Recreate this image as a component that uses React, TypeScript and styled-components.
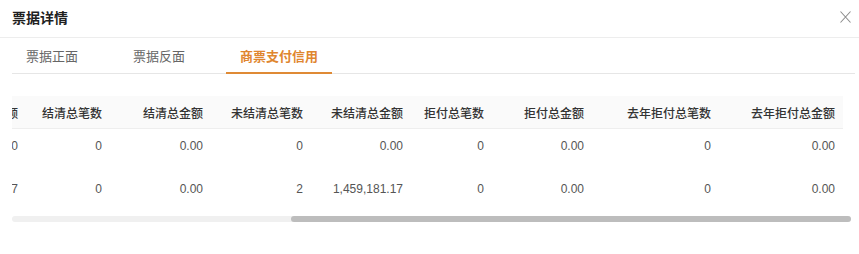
import * as React from 'react';
import styled, { createGlobalStyle } from 'styled-components';

interface Column {
  key: string;
  title: string;
  width: number;
}

interface CreditRow {
  id: string;
  tall?: boolean;
  values: Record<string, string>;
}

const columns: Column[] = [
  { key: 'issueCount', title: '出票总笔数', width: 84 },
  { key: 'issueAmount', title: '出票总金额', width: 149 },
  { key: 'acceptCount', title: '承兑总笔数', width: 100 },
  { key: 'acceptAmount', title: '承兑总金额', width: 100 },
  { key: 'settleCount', title: '结清总笔数', width: 84 },
  { key: 'settleAmount', title: '结清总金额', width: 101 },
  { key: 'openCount', title: '未结清总笔数', width: 100 },
  { key: 'openAmount', title: '未结清总金额', width: 100 },
  { key: 'refuseCount', title: '拒付总笔数', width: 81 },
  { key: 'refuseAmount', title: '拒付总金额', width: 100 },
  { key: 'lastRefuseCount', title: '去年拒付总笔数', width: 127 },
  { key: 'lastRefuseAmount', title: '去年拒付总金额', width: 124 },
];

const rows: CreditRow[] = [
  {
    id: 'r1',
    values: {
      issueCount: '0', issueAmount: '0.00', acceptCount: '0', acceptAmount: '0.00',
      settleCount: '0', settleAmount: '0.00', openCount: '0', openAmount: '0.00',
      refuseCount: '0', refuseAmount: '0.00', lastRefuseCount: '0', lastRefuseAmount: '0.00',
    },
  },
  {
    id: 'r2',
    tall: true,
    values: {
      issueCount: '2', issueAmount: '1,459,181.17', acceptCount: '2', acceptAmount: '1,459,181.17',
      settleCount: '0', settleAmount: '0.00', openCount: '2', openAmount: '1,459,181.17',
      refuseCount: '0', refuseAmount: '0.00', lastRefuseCount: '0', lastRefuseAmount: '0.00',
    },
  },
];

const tabs = ['票据正面', '票据反面', '商票支付信用'];

const GlobalStyle = createGlobalStyle`
  body {
    margin: 0;
    background: #fff;
    font-family: "Liberation Sans", "Noto Sans CJK SC", sans-serif;
  }
`;

const Dialog = styled.div`
  width: 859px;
  height: 254px;
  background: #fff;
`;

const Header = styled.div`
  height: 38px;
  box-sizing: border-box;
  padding: 0 7px 3px 12px;
  display: flex;
  align-items: center;
  justify-content: space-between;
  border-bottom: 1px solid #ededed;
`;

const Title = styled.div`
  font-size: 14px;
  font-weight: 700;
  color: #1f1f1f;
`;

const Close = styled.button`
  width: 14px;
  height: 14px;
  padding: 0;
  border: none;
  background: none;
  display: flex;
  align-items: center;
  justify-content: center;
  cursor: pointer;
`;

const Body = styled.div`
  padding: 0 8px 0 12px;
`;

const Tabs = styled.div`
  display: flex;
  gap: 27px;
  height: 35px;
  margin-right: -4px;
  border-bottom: 1px solid #e6e6e6;
`;

const Tab = styled.div<{ $active?: boolean }>`
  position: relative;
  padding: 2px 14px 0;
  line-height: 33px;
  font-size: 13px;
  font-weight: ${(p) => (p.$active ? 600 : 400)};
  color: ${(p) => (p.$active ? '#df862f' : '#666')};

  &::after {
    content: '';
    display: ${(p) => (p.$active ? 'block' : 'none')};
    position: absolute;
    left: 0;
    right: 0;
    bottom: -1px;
    height: 2px;
    background: #df8a35;
  }
`;

const TableArea = styled.div`
  margin-top: 22px;
`;

const Scroller = styled.div`
  overflow: hidden;
`;

const Inner = styled.div`
  width: max-content;
  padding-right: 8px;
`;

const Table = styled.table`
  border-collapse: collapse;
  table-layout: fixed;
`;

const Th = styled.th`
  height: 32px;
  padding: 0 8px 0 0;
  background: #fafafa;
  border-bottom: 1px solid #eeeeee;
  text-align: right;
  white-space: nowrap;
  font-size: 12px;
  font-weight: 500;
  color: #333;
`;

const Tr = styled.tr<{ $tall?: boolean }>`
  height: ${(p) => (p.$tall ? 51 : 35)}px;

  & + & td {
    border-top: 1px solid #eeeeee;
  }
`;

const Td = styled.td`
  padding: 0 8px 0 0;
  text-align: right;
  white-space: nowrap;
  font-size: 12px;
  color: #555;
`;

const Track = styled.div`
  position: relative;
  margin-top: 1px;
  height: 6px;
  border-radius: 3px;
  background: #f0f0f0;
`;

const Thumb = styled.div`
  position: absolute;
  top: 0;
  height: 6px;
  border-radius: 3px;
  background: #bdbdbd;
`;

export default function App() {
  const scrollRef = React.useRef<HTMLDivElement>(null);
  const [thumb, setThumb] = React.useState({ left: 0, width: 0 });

  React.useLayoutEffect(() => {
    const el = scrollRef.current;
    if (!el) return;
    el.scrollLeft = el.scrollWidth - el.clientWidth;
    const ratio = el.clientWidth / el.scrollWidth;
    setThumb({
      left: el.scrollLeft * ratio,
      width: el.clientWidth * ratio,
    });
  }, []);

  return (
    <Dialog>
      <GlobalStyle />
      <Header>
        <Title>票据详情</Title>
        <Close aria-label="关闭">
          <svg width="11" height="12" viewBox="0 0 11 12">
            <path d="M0.5 0.5 L10.5 11.5 M10.5 0.5 L0.5 11.5" stroke="#8c8c8c" strokeWidth="1.1" fill="none" />
          </svg>
        </Close>
      </Header>
      <Body>
        <Tabs>
          {tabs.map((t, i) => (
            <Tab key={t} $active={i === 2}>{t}</Tab>
          ))}
        </Tabs>
        <TableArea>
          <Scroller ref={scrollRef}>
            <Inner>
              <Table>
                <colgroup>
                  {columns.map((c) => (
                    <col key={c.key} style={{ width: c.width }} />
                  ))}
                </colgroup>
                <thead>
                  <tr>
                    {columns.map((c) => (
                      <Th key={c.key}>{c.title}</Th>
                    ))}
                  </tr>
                </thead>
                <tbody>
                  {rows.map((r) => (
                    <Tr key={r.id} $tall={r.tall}>
                      {columns.map((c) => (
                        <Td key={c.key}>{r.values[c.key]}</Td>
                      ))}
                    </Tr>
                  ))}
                </tbody>
              </Table>
            </Inner>
          </Scroller>
          <Track>
            <Thumb style={{ left: thumb.left, width: thumb.width }} />
          </Track>
        </TableArea>
      </Body>
    </Dialog>
  );
}
